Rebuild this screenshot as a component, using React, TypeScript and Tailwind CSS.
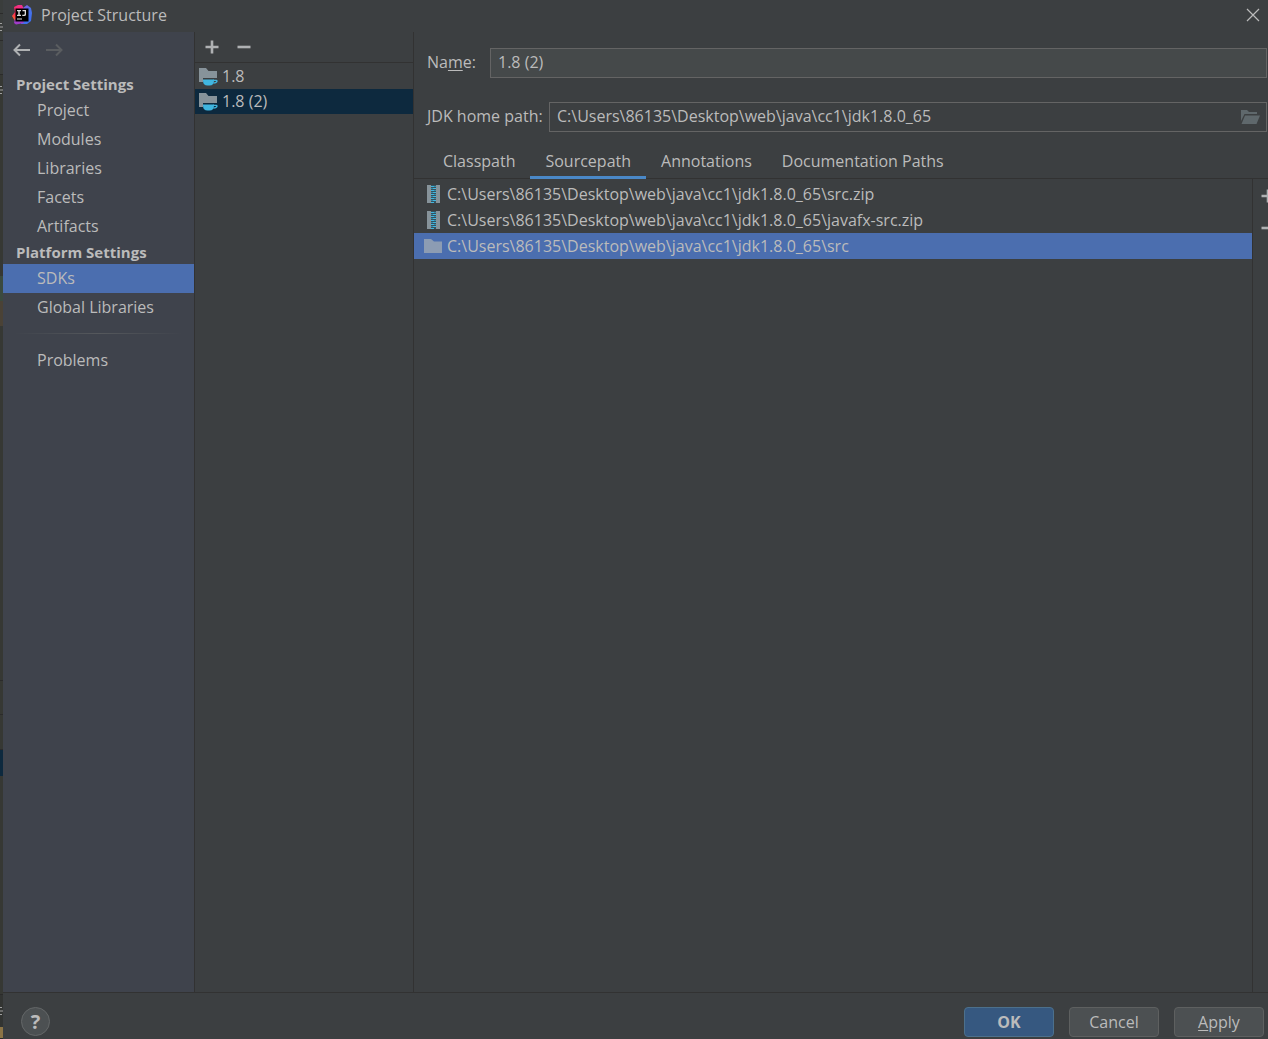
import clsx from 'clsx'
import React from 'react'

const projectItems = ['Project', 'Modules', 'Libraries', 'Facets', 'Artifacts']
const platformItems = ['SDKs', 'Global Libraries']
const sdks = ['1.8', '1.8 (2)']
const tabs = ['Classpath', 'Sourcepath', 'Annotations', 'Documentation Paths']
const home = 'C:\\Users\\86135\\Desktop\\web\\java\\cc1\\jdk1.8.0_65'
const sources = [
    { path: home + '\\src.zip', zip: true },
    { path: home + '\\javafx-src.zip', zip: true },
    { path: home + '\\src', zip: false },
]

// slice of the editor that shows past the left edge of the dialog
const strip = [
    { h: 'h-[13px]', c: 'bg-[#3a3d3c]' },
    { h: 'h-px', c: 'bg-[#2b2b2b]' },
    { h: 'h-[26px]', c: 'bg-[#3a3d3c]', mark: true },
    { h: 'h-px', c: 'bg-[#2b2b2b]' },
    { h: 'h-[33px]', c: 'bg-[#3a3d3c]' },
    { h: 'h-px', c: 'bg-[#2b2b2b]' },
    { h: 'h-[30px]', c: 'bg-[#363834]', mark: true },
    { h: 'h-[171px]', c: 'bg-[#363834]' },
    { h: 'h-[25px]', c: 'bg-[#3b4a3f]' },
    { h: 'h-[25px]', c: 'bg-[#4a4236]' },
    { h: 'h-[354px]', c: 'bg-[#363834]' },
    { h: 'h-px', c: 'bg-[#2b2b2b]' },
    { h: 'h-[33px]', c: 'bg-[#363834]' },
    { h: 'h-px', c: 'bg-[#2b2b2b]' },
    { h: 'h-[34px]', c: 'bg-[#363834]' },
    { h: 'h-px', c: 'bg-[#2b2b2b]' },
    { h: 'h-[26px]', c: 'bg-[#0d293e]' },
    { h: 'h-[218px]', c: 'bg-[#363834]' },
    { h: 'h-px', c: 'bg-[#2b2b2b]' },
    { h: 'h-[32px]', c: 'bg-[#323432]', mark: true },
    { h: 'h-[11px]', c: 'bg-[#8c7446]' },
]

function PlusIcon() {
    return <svg width="14" height="14" viewBox="0 0 14 14" fill="#afb1b3"><path d="M5.700.500h2.600v5.200h5.200v2.600H8.300v5.200H5.700V8.300H.500V5.700h5.200z" /></svg>
}

function MinusIcon() {
    return <svg width="14" height="14" viewBox="0 0 14 14" fill="#afb1b3"><path d="M.500 5.700h13v2.600H.500z" /></svg>
}

function SdkIcon() {
    return (
        <svg width="20" height="18" viewBox="0 0 20 18">
            <path d="M1 0h7l2.500 3H19v7H5v4H1z" fill="#87939a" />
            <path d="M5 11.500h11v1.200q0 4.800-4.500 4.800h-2Q5 17.500 5 12.500z" fill="#40b6e0" />
            <path d="M15 12.300h3.300q.900.200.600 1.300-.700 1.400-3.400 1.500" fill="none" stroke="#40b6e0" strokeWidth="1.300" />
        </svg>
    )
}

function ZipIcon() {
    return (
        <svg width="18" height="18" viewBox="0 0 18 18" shapeRendering="crispEdges">
            <path d="M3 0h4v18H3zM12 0h4v18h-4z" fill="#87939a" />
            <path d="M7 0h5v18H7z" fill="#35525e" />
            <path d="M7 1h3v1H7zM9 3h3v1H9zM7 5h3v1H7zM9 7h3v1H9zM7 9h3v1H7zM9 11h3v1H9zM7 13h3v1H7zM9 15h3v1H9zM7 17h3v1H7z" fill="#40b6e0" />
            <path d="M10 1h2v1h-2zM7 3h2v1H7zM10 5h2v1h-2zM7 7h2v1H7zM10 9h2v1h-2zM7 11h2v1H7zM10 13h2v1h-2zM7 15h2v1H7z" fill="#3a8ba8" />
        </svg>
    )
}

function FolderIcon() {
    return <svg width="18" height="14" viewBox="0 0 18 14" fill="#8c9cb3"><path d="M0 0h7l3 2.500h8V14H0z" /></svg>
}

function OpenFolderIcon() {
    return (
        <svg width="20" height="16" viewBox="0 0 20 16" fill="#5f686c">
            <path d="M1 1h6l2 2h8v2H4.500L1 12z" />
            <path d="M5 6.500h15L16.500 15H1.500z" />
        </svg>
    )
}

function Logo() {
    return (
        <svg width="21" height="20" viewBox="0 0 21 20">
            <defs>
                <linearGradient id="warm" x1="0" y1="1" x2="0.600" y2="0">
                    <stop offset="0" stopColor="#fc801d" />
                    <stop offset=".45" stopColor="#fe2857" />
                    <stop offset="1" stopColor="#f0308c" />
                </linearGradient>
                <linearGradient id="cool" x1="0" y1="0" x2="0.500" y2="1">
                    <stop offset="0" stopColor="#a259e8" />
                    <stop offset=".5" stopColor="#4a72e8" />
                    <stop offset="1" stopColor="#3d6ff0" />
                </linearGradient>
            </defs>
            <path d="M0 11l3-4-1-5 4-2h4l2 4-6 10-3 2z" fill="url(#warm)" />
            <path d="M11 3l4-3 4 3 1 5-1 8-4 3H9z" fill="url(#cool)" />
            <path d="M3 14l6-2 3 6-8 1.500L2 18z" fill="#a03cc8" />
            <path d="M3.500 3.500h13v13h-13z" fill="#000" />
            <path d="M5 5h4v1.200H7.700v3.600H9V11H5V9.800h1.300V6.200H5zM10.500 5H14v4.500Q14 11 12.300 11h-2V9.800h1.500q.900 0 .900-.800V6.200h-2.200zM5 13.500h5v1H5z" fill="#ddd" />
        </svg>
    )
}

function NavItem({ label, active = false }: { label: string; active?: boolean }) {
    return (
        <li>
            <a href="#" className={clsx('block h-[29px] pl-[34px] leading-[29px]', active && 'bg-[#4b6eaf]')}>{label}</a>
        </li>
    )
}

export default function App() {
    return (
        <div className="flex h-screen overflow-hidden bg-[#3c3f41] font-['Open_Sans',sans-serif] text-base leading-5 text-[#bbbbbb]">
            {/* EDITOR EDGE */}
            <div className="w-[3px] shrink-0 overflow-hidden bg-[#2b2b2b]" aria-hidden="true">
                {strip.map((s, i) => (
                    <div key={i} className={clsx('flex items-center overflow-hidden', s.h, s.c)}>
                        {s.mark && <svg width="3" height="8" viewBox="0 0 3 8" stroke="#a0a0a0"><path d="M0 .500h2M0 4h3M0 7.500h2" /></svg>}
                    </div>
                ))}
            </div>

            <div className="flex min-w-0 flex-1 flex-col">
                {/* TITLE BAR */}
                <header className="flex h-[30px] shrink-0 items-center gap-2 pr-2 pl-[9px]">
                    <Logo />
                    <h1 className="flex-1">Project Structure</h1>
                    <button aria-label="Close">
                        <svg width="14" height="14" viewBox="0 0 14 14" stroke="#bbbbbb" strokeWidth="1.200"><path d="M1 1l12 12M13 1L1 13" /></svg>
                    </button>
                </header>

                <main className="flex min-h-0 flex-1 pt-[2px]">
                    {/* SETTINGS NAV */}
                    <nav className="w-48 shrink-0 border-r border-[#323232] bg-[#3f434c]">
                        <div className="flex h-9 items-center gap-[15px] pl-[10px]">
                            <button aria-label="Back">
                                <svg width="18" height="14" viewBox="0 0 18 14" fill="none" stroke="#afb1b3" strokeWidth="2"><path d="M17 7H2M7 1.500L1.500 7 7 12.500" /></svg>
                            </button>
                            <button aria-label="Forward" disabled>
                                <svg width="18" height="14" viewBox="0 0 18 14" fill="none" stroke="#5a5d60" strokeWidth="2"><path d="M0 7h15M10 1.500L15.500 7 10 12.500" /></svg>
                            </button>
                        </div>
                        <h2 className="mt-[5px] h-[23px] pl-[13px] text-[15px] leading-[23px] font-bold">Project Settings</h2>
                        <ul>
                            {projectItems.map((label) => <NavItem key={label} label={label} />)}
                        </ul>
                        <h2 className="h-[23px] pl-[13px] text-[15px] leading-[23px] font-bold">Platform Settings</h2>
                        <ul>
                            {platformItems.map((label) => <NavItem key={label} label={label} active={label === 'SDKs'} />)}
                        </ul>
                        <div className="mx-3 mt-[11px] mb-3 h-px bg-linear-to-r from-transparent via-[#55585c] to-transparent" />
                        <ul>
                            <NavItem label="Problems" />
                        </ul>
                    </nav>

                    {/* SDK LIST */}
                    <section className="w-[219px] shrink-0 border-r border-[#323232]">
                        <div className="flex h-[31px] items-center gap-[18px] border-b border-[#323232] pl-[10px]">
                            <button aria-label="Add SDK"><PlusIcon /></button>
                            <button aria-label="Remove SDK"><MinusIcon /></button>
                        </div>
                        <ul>
                            {sdks.map((name, i) => (
                                <li key={name} className={clsx('flex h-[25px] items-center gap-1 pl-[3px]', i === 0 ? 'mt-px' : 'bg-[#0d293e]')}>
                                    <SdkIcon /><span className="pb-[2px]">{name}</span>
                                </li>
                            ))}
                        </ul>
                    </section>

                    {/* SDK DETAILS */}
                    <section className="flex min-w-0 flex-1 flex-col">
                        <div className="mt-4 flex h-[30px] items-center pr-px pl-[13px]">
                            <label htmlFor="name" className="w-[63px] pb-[2px]">Na<u className="underline-offset-2">m</u>e:</label>
                            <input id="name" defaultValue="1.8 (2)" className="h-[30px] min-w-0 flex-1 border border-[#646464] bg-[#45494a] px-[7px] pb-[2px]" />
                        </div>
                        <div className="mt-6 flex h-[30px] items-center pr-px pl-[13px]">
                            <label htmlFor="home" className="w-[122px] pb-[2px]">JDK home path:</label>
                            <div className="flex h-[30px] min-w-0 flex-1 items-center border border-[#646464] pr-[6px]">
                                <input id="home" defaultValue={home} className="min-w-0 flex-1 bg-transparent px-[7px] pb-[2px]" />
                                <button aria-label="Browse"><OpenFolderIcon /></button>
                            </div>
                        </div>
                        <div role="tablist" className="mt-[13px] flex h-[34px] border-b border-[#323232] pl-[14px]">
                            {tabs.map((tab) => (
                                <button key={tab} role="tab" className={clsx('h-[34px] border-b-3 px-[15px]', tab === 'Sourcepath' ? 'border-[#4a88c7]' : 'border-transparent')}>{tab}</button>
                            ))}
                        </div>
                        <div className="flex min-h-0 flex-1">
                            <ul className="flex-1 border-r border-[#323232] pt-[2px]">
                                {sources.map((s) => (
                                    <li key={s.path} className={clsx('flex h-[26px] items-center gap-[5px] pl-[10px]', !s.zip && 'bg-[#4b6eaf]')}>
                                        {s.zip ? <ZipIcon /> : <FolderIcon />}{s.path}
                                    </li>
                                ))}
                            </ul>
                            <div className="flex w-[15px] flex-col items-start gap-[18px] overflow-hidden pt-[10px] pl-2">
                                <button className="shrink-0" aria-label="Add path"><PlusIcon /></button>
                                <button className="shrink-0" aria-label="Remove path"><MinusIcon /></button>
                            </div>
                        </div>
                    </section>
                </main>

                {/* FOOTER */}
                <footer className="flex h-[47px] shrink-0 items-start gap-[15px] border-t border-[#323232] pt-[14px] pr-1 pl-[18px]">
                    <button aria-label="Help" className="size-[29px] rounded-full border border-[#646768] bg-[#4c5052] text-xl leading-6 font-bold">?</button>
                    <div className="flex-1" />
                    <button className="h-[30px] w-[90px] rounded border border-[#4c708c] bg-[#365880] font-bold">OK</button>
                    <button className="h-[30px] w-[90px] rounded border border-[#5e6060] bg-[#4c5052]">Cancel</button>
                    <button className="h-[30px] w-[90px] rounded border border-[#5e6060] bg-[#4c5052]"><u className="underline-offset-2">A</u>pply</button>
                </footer>
            </div>
        </div>
    )
}
